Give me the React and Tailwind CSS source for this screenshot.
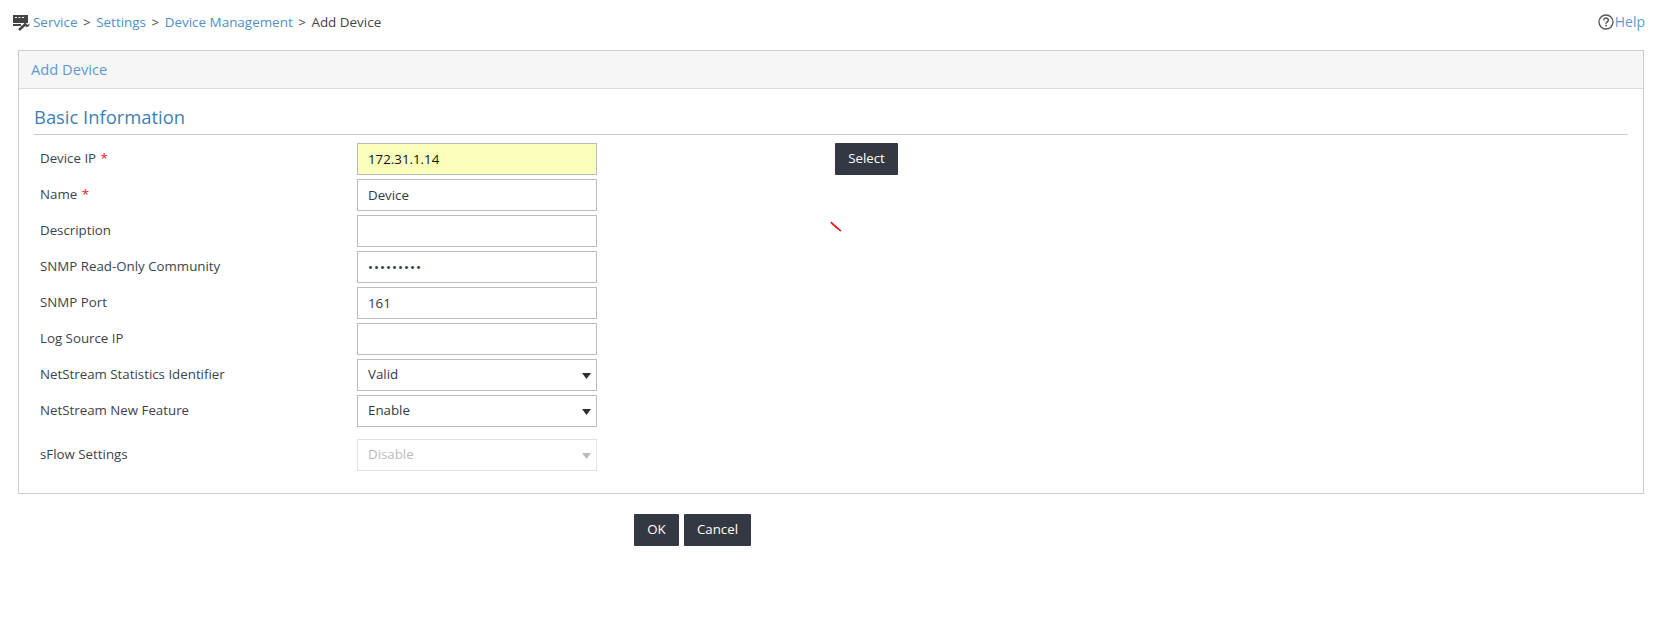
import React from "react";

const fieldBase =
  "block w-[240px] h-8 border border-[#bbbbbb] px-[10px] text-[13.3px] outline-none";

const Label = ({ children, required }) => (
  <label className="w-[317px] shrink-0 text-[13.3px] text-[#3d434d]">
    {children}
    {required && <span className="ml-[1px] text-[#e02020]"> *</span>}
  </label>
);

const Caret = ({ disabled }) => (
  <svg
    className="absolute right-[5px] top-[13px]"
    width="9"
    height="6"
    viewBox="0 0 9 6"
  >
    <path d="M0 0h9L4.5 6z" fill={disabled ? "#bdbdbd" : "#2b2f36"} />
  </svg>
);

const TextRow = ({ label, required, value, type = "text", tint }) => (
  <div className="flex items-center h-8 mb-1">
    <Label required={required}>{label}</Label>
    <input
      type={type}
      value={value}
      readOnly
      className={`${fieldBase} ${
        tint ? "bg-[#fbfebb] text-[#111111]" : "bg-white text-[#333a45]"
      } ${type === "password" ? "tracking-[1px]" : ""}`}
    />
  </div>
);

const SelectRow = ({ label, value }) => (
  <div className="flex items-center h-8 mb-1">
    <Label>{label}</Label>
    <div className={`${fieldBase} bg-white text-[#333a45] relative flex items-center`}>
      {value}
      <Caret />
    </div>
  </div>
);

const DarkButton = ({ children, className = "" }) => (
  <button
    className={`h-8 bg-[#343842] text-white text-[13.3px] rounded-[1px] ${className}`}
  >
    {children}
  </button>
);

const App = () => {
  return (
    <div
      className="w-[1654px] h-[627px] bg-white relative overflow-hidden"
      style={{ fontFamily: '"Open Sans", "Liberation Sans", sans-serif' }}
    >
      <div className="h-[50px] pl-[13px] pr-[9px] pt-[13px] flex items-start justify-between text-[13.45px] leading-[18px]">
        <div className="flex items-center text-[#4d90c9]">
          <svg width="17" height="17" viewBox="0 0 17 17" className="mr-[3px]">
            <rect x="0" y="1" width="15" height="8" fill="#444444" />
            <path d="M2 3.500h2M5.500 3.500h2M9 3.500h2" stroke="#ffffff" strokeWidth="1" />
            <path d="M0 11h8" stroke="#444444" strokeWidth="2" />
            <path d="M6 16l6-5.500" stroke="#444444" strokeWidth="2.400" />
            <path d="M11 10.500c0-2 2-3.500 4-2.800l-2 1.800 1.600 1.600 1.900-1.600c.4 2-1.400 4-3.500 3.300z" fill="#444444" />
          </svg>
          <span>Service</span>
          <span className="mx-[5.5px] text-[#444444]">&gt;</span>
          <span>Settings</span>
          <span className="mx-[5.5px] text-[#444444]">&gt;</span>
          <span>Device Management</span>
          <span className="mx-[5.5px] text-[#444444]">&gt;</span>
          <span className="text-[#444444]">Add Device</span>
        </div>
        <div className="flex items-center text-[#5b9bd5] text-[14px]">
          <svg width="16" height="16" viewBox="0 0 16 16" className="mr-[1px]">
            <circle cx="8" cy="8" r="7" fill="none" stroke="#555555" strokeWidth="1.300" />
            <path d="M5.800 6.200c0-3 4.600-2.800 4.500 0 0 1.700-2.300 1.700-2.300 3.500" fill="none" stroke="#555555" strokeWidth="1.500" />
            <rect x="7.200" y="10.800" width="1.600" height="1.600" fill="#555555" />
          </svg>
          Help
        </div>
      </div>

      <div className="ml-[18px] w-[1626px] h-[444px] border border-[#cccccc]">
        <div className="h-[38px] bg-[#f6f6f6] border-b border-[#dddddd] pl-[12px] flex items-center text-[14.7px] text-[#5b9bd5]">
          Add Device
        </div>
        <div className="mx-[15px] pt-[16px]">
          <h2 className="h-[30px] border-b border-[#cccccc] text-[18.4px] leading-[24px] text-[#3f7fb8]">
            Basic Information
          </h2>
          <div className="pt-[8px] pl-[6px]">
            <TextRow label="Device IP" required value="172.31.1.14" tint />
            <TextRow label="Name" required value="Device" />
            <TextRow label="Description" value="" />
            <TextRow label="SNMP Read-Only Community" value="password1" type="password" />
            <TextRow label="SNMP Port" value="161" />
            <TextRow label="Log Source IP" value="" />
            <SelectRow label="NetStream Statistics Identifier" value="Valid" />
            <SelectRow label="NetStream New Feature" value="Enable" />
            <div className="flex items-center h-8 mt-3">
              <Label>sFlow Settings</Label>
              <div className="relative flex items-center w-[240px] h-8 border border-[#e2e2e2] px-[10px] text-[13.3px] text-[#bbbbbb]">
                Disable
                <Caret disabled />
              </div>
            </div>
          </div>
        </div>
      </div>

      <div className="mt-[20px] ml-[634px] flex gap-[5px]">
        <DarkButton className="w-[45px]">OK</DarkButton>
        <DarkButton className="w-[67px]">Cancel</DarkButton>
      </div>

      <DarkButton className="absolute left-[835px] top-[143px] w-[63px]">Select</DarkButton>

      <svg className="absolute left-[830px] top-[221px]" width="12" height="11" viewBox="0 0 12 11">
        <path d="M1 1c2 3 5 5 10 9" fill="none" stroke="#f01010" strokeWidth="1.600" />
      </svg>
    </div>
  );
};

export default App;
